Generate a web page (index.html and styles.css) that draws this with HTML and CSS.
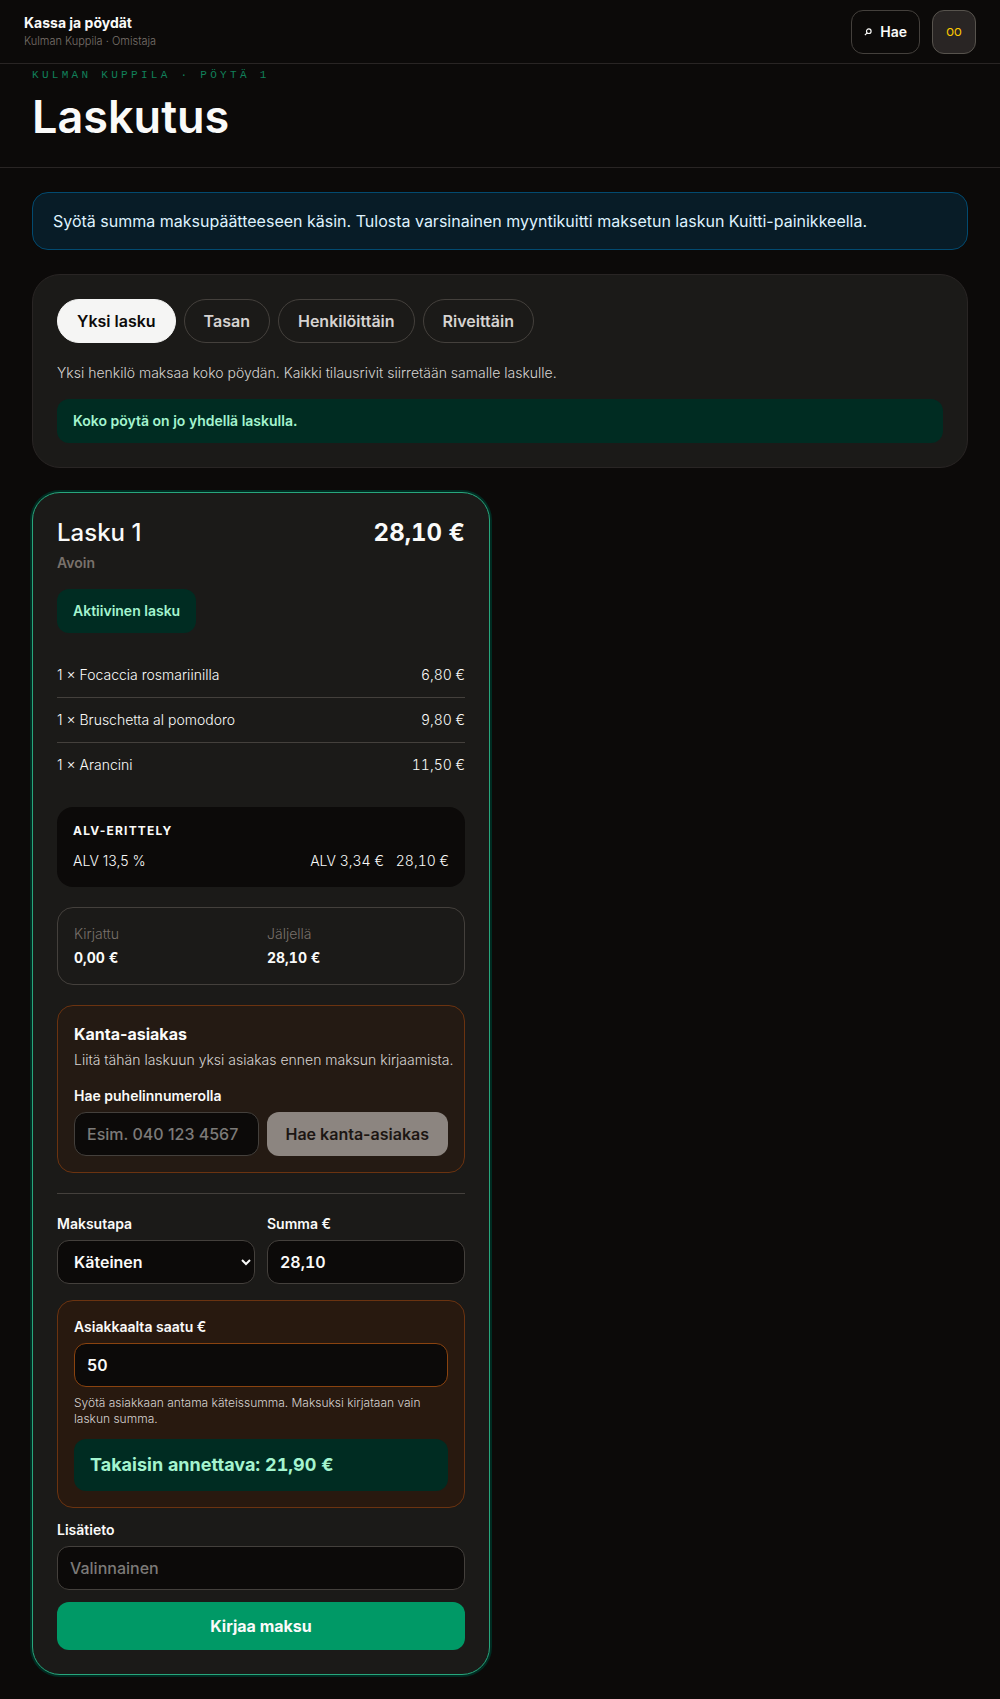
FILE: index.html
```html
<!DOCTYPE html>
<html lang="fi">
<head>
<meta charset="utf-8">
<meta name="viewport" content="width=device-width, initial-scale=1">
<title>Laskutus – Kulman Kuppila</title>
<link rel="stylesheet" href="styles.css">
</head>
<body>
<header class="topbar">
  <div>
    <p class="topbar-title">Kassa ja pöydät</p>
    <p class="topbar-sub">Kulman Kuppila · Omistaja</p>
  </div>
  <div class="topbar-actions">
    <button class="search" type="button">
      <svg class="search-icon" viewBox="0 0 8 8" aria-hidden="true"><circle cx="4.8" cy="3.2" r="2.3"/><path d="M3.1 4.9 0.9 7.1"/></svg>
      Hae
    </button>
    <button class="avatar" type="button" aria-label="Käyttäjävalikko">OO</button>
  </div>
</header>
<div class="hero">
  <p class="eyebrow">Kulman Kuppila · Pöytä 1</p>
  <h1>Laskutus</h1>
</div>
<main>
  <p class="notice">Syötä summa maksupäätteeseen käsin. Tulosta varsinainen myyntikuitti maksetun laskun Kuitti-painikkeella.</p>
  <section class="panel">
    <div class="tabs">
      <button class="tab active" type="button">Yksi lasku</button>
      <button class="tab" type="button">Tasan</button>
      <button class="tab" type="button">Henkilöittäin</button>
      <button class="tab" type="button">Riveittäin</button>
    </div>
    <p class="panel-text">Yksi henkilö maksaa koko pöydän. Kaikki tilausrivit siirretään samalle laskulle.</p>
    <p class="status">Koko pöytä on jo yhdellä laskulla.</p>
  </section>
  <div class="bills">
    <article class="bill">
      <div class="bill-head">
        <h2>Lasku 1</h2>
        <p class="total">28,10 €</p>
      </div>
      <p class="state">Avoin</p>
      <p class="status badge">Aktiivinen lasku</p>
      <ul class="lines">
        <li><span>1 × Focaccia rosmariinilla</span><span class="num">6,80 €</span></li>
        <li><span>1 × Bruschetta al pomodoro</span><span class="num">9,80 €</span></li>
        <li><span>1 × Arancini</span><span class="num">11,50 €</span></li>
      </ul>
      <section class="vat">
        <h3>ALV-erittely</h3>
        <div class="vat-row"><span>ALV 13,5 %</span><span class="vat-sums num"><span>ALV 3,34 €</span><span>28,10 €</span></span></div>
      </section>
      <dl class="balance">
        <div><dt>Kirjattu</dt><dd>0,00 €</dd></div>
        <div><dt>Jäljellä</dt><dd>28,10 €</dd></div>
      </dl>
      <section class="warm loyalty">
        <h3>Kanta-asiakas</h3>
        <p class="warm-text">Liitä tähän laskuun yksi asiakas ennen maksun kirjaamista.</p>
        <label for="phone">Hae puhelinnumerolla</label>
        <div class="lookup">
          <input class="field" id="phone" type="tel" placeholder="Esim. 040 123 4567">
          <button class="lookup-button" type="button" disabled>Hae kanta-asiakas</button>
        </div>
      </section>
      <form class="payment">
        <div class="pair">
          <div>
            <label for="method">Maksutapa</label>
            <select class="field" id="method"><option>Käteinen</option></select>
          </div>
          <div>
            <label for="amount">Summa €</label>
            <input class="field num" id="amount" type="text" value="28,10">
          </div>
        </div>
        <div class="warm cash">
          <label for="received">Asiakkaalta saatu €</label>
          <input class="field num" id="received" type="text" value="50">
          <p class="help">Syötä asiakkaan antama käteissumma. Maksuksi kirjataan vain laskun summa.</p>
          <output class="change num" for="received">Takaisin annettava: 21,90 €</output>
        </div>
        <div>
          <label for="note">Lisätieto</label>
          <input class="field" id="note" type="text" placeholder="Valinnainen">
        </div>
        <button class="submit" type="submit">Kirjaa maksu</button>
      </form>
    </article>
  </div>
</main>
</body>
</html>
```
FILE: styles.css
```css
* { box-sizing: border-box; }

body {
  margin: 0;
  background: #0c0a09;
  color: #fafaf9;
  font: 14px/20px Inter, sans-serif;
}

h1, h2, h3, p, ul, dl, dd { margin: 0; padding: 0; }
button, input, select { font: inherit; color: inherit; }
.num { font-variant-numeric: tabular-nums; }

.topbar {
  display: flex;
  align-items: center;
  justify-content: space-between;
  padding: 10px 24px 9px;
  border-bottom: 1px solid #292524;
}
.topbar-title { font-weight: 700; line-height: 20px; }
.topbar-sub { padding-bottom: 2px; color: #79716b; font-size: 11px; font-weight: 300; line-height: 16px; }
.topbar-actions { display: flex; gap: 12px; }

.search {
  display: flex;
  align-items: center;
  gap: 8px;
  height: 44px;
  padding: 0 12px;
  border: 1px solid #44403c;
  border-radius: 12px;
  background: transparent;
  font-weight: 600;
}
.search-icon { width: 8px; height: 8px; fill: none; stroke: currentColor; stroke-width: 1.2; }
.avatar {
  width: 44px;
  height: 44px;
  padding: 0;
  border: 1px solid #57534d;
  border-radius: 12px;
  background: #292524;
  color: #fcc800;
  font-size: 10px;
  font-weight: 500;
}

.hero { padding: 3px 32px 24px; border-bottom: 1px solid #292524; }
.eyebrow {
  color: #11805a;
  font: 11px/16px "Liberation Mono", monospace;
  letter-spacing: 0.3em;
  text-transform: uppercase;
}
h1 { margin-top: 8px; font-size: 45px; font-weight: 600; line-height: 52px; }

main { display: grid; gap: 24px; padding: 24px 32px; }

.notice {
  padding: 16px 20px;
  border: 1px solid #024a70;
  border-radius: 16px;
  background: #081c27;
  color: #dff2fe;
  font-size: 16px;
  line-height: 24px;
}

.panel {
  padding: 24px;
  border: 1px solid #292524;
  border-radius: 28px;
  background: #1b1a18;
}
.tabs { display: flex; flex-wrap: wrap; gap: 8px; }
.tab {
  height: 44px;
  padding: 0 19px;
  border: 1px solid #44403c;
  border-radius: 22px;
  background: transparent;
  color: #d6d3d1;
  font-size: 16px;
  font-weight: 600;
}
.tab.active { border-color: #f5f5f4; background: #f5f5f4; color: #0c0a09; }
.panel-text { margin-top: 20px; color: #d6d3d1; font-weight: 300; }
.status {
  margin-top: 16px;
  padding: 12px 16px;
  border-radius: 12px;
  background: #002c22;
  color: #a4f4cf;
  font-weight: 600;
}

.bills { display: grid; grid-template-columns: 1fr 1fr; gap: 20px; }
.bill {
  padding: 24px;
  border: 1px solid #28a67c;
  border-radius: 28px;
  background: #1b1a18;
  box-shadow: 0 0 0 2px #002c22;
}
.bill-head { display: flex; justify-content: space-between; font-size: 24px; line-height: 32px; }
h2 { font-size: 24px; font-weight: 500; }
.total { font-weight: 700; font-variant-numeric: tabular-nums; }
.state { margin-top: 4px; color: #79716b; font-weight: 600; }
.badge { width: fit-content; }

.lines { margin-top: 20px; list-style: none; }
.lines li { display: flex; justify-content: space-between; padding: 12px 0; font-weight: 300; }
.lines li + li { border-top: 1px solid #44403c; }

.vat { margin-top: 20px; padding: 16px; border-radius: 16px; background: #0c0a09; }
.vat h3 {
  font-size: 12px;
  font-weight: 700;
  line-height: 16px;
  letter-spacing: 0.1em;
  text-transform: uppercase;
}
.vat-row { display: flex; justify-content: space-between; margin-top: 12px; font-weight: 300; }
.vat-sums { display: flex; gap: 12px; }

.balance {
  display: grid;
  grid-template-columns: 1fr 1fr;
  gap: 12px;
  margin-top: 20px;
  padding: 16px;
  border: 1px solid #44403c;
  border-radius: 16px;
}
dt { color: #79716b; font-weight: 300; }
dd { margin-top: 4px; font-weight: 700; font-variant-numeric: tabular-nums; }

.warm { padding: 16px; border: 1px solid #6b3310; border-radius: 16px; }
.loyalty { margin-top: 20px; background: #241a13; }
.loyalty h3 { font-size: 16px; font-weight: 700; line-height: 24px; }
.warm-text { margin: 4px -12px 16px 0; color: #d6d3d1; font-weight: 300; }

label { display: block; margin-bottom: 6px; font-weight: 600; }
.field {
  display: block;
  width: 100%;
  min-width: 0;
  height: 44px;
  padding: 0 12px;
  border: 1px solid #44403c;
  border-radius: 12px;
  background: #0c0a09;
  font-size: 16px;
  font-weight: 600;
}
.field::placeholder { color: #7c7a78; font-weight: 500; }
.lookup { display: grid; grid-template-columns: 1fr auto; gap: 8px; }
.lookup-button {
  padding: 0 19px;
  border: 0;
  border-radius: 12px;
  background: #8c8580;
  color: #1c1613;
  font-size: 16px;
  font-weight: 600;
}

.payment {
  display: grid;
  gap: 12px;
  margin-top: 20px;
  padding-top: 20px;
  border-top: 1px solid #44403c;
}
.pair { display: grid; grid-template-columns: 1fr 1fr; gap: 12px; margin-bottom: 4px; }
.cash { background: #28190f; }
.cash .field { border-color: #8a430f; }
.help { margin: 8px 0 12px; color: #d6d3d1; font-size: 12px; font-weight: 300; line-height: 16px; }
.change {
  display: block;
  padding: 12px 16px;
  border-radius: 12px;
  background: #002c22;
  color: #a4f4cf;
  font-size: 18px;
  font-weight: 700;
  line-height: 28px;
}
.submit {
  height: 48px;
  border: 0;
  border-radius: 12px;
  background: #009966;
  font-size: 16px;
  font-weight: 700;
}
```
